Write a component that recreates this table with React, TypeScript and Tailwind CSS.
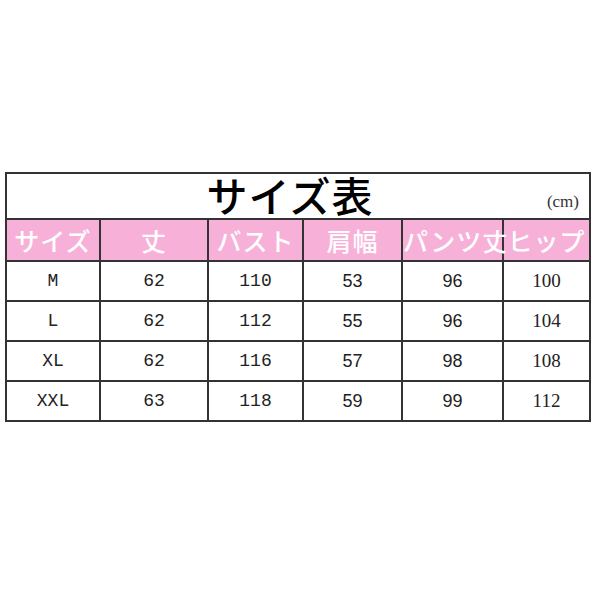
const headers = ['サイズ', '丈', 'バスト', '肩幅', 'パンツ丈', 'ヒップ'];

const rows = [
  ['M', '62', '110', '53', '96', '100'],
  ['L', '62', '112', '55', '96', '104'],
  ['XL', '62', '116', '57', '98', '108'],
  ['XXL', '63', '118', '59', '99', '112'],
];

const colWidths = ['w-[94px]', 'w-[108px]', 'w-[95px]', 'w-[99px]', 'w-[101px]', 'w-[87px]'];

const cellFonts = [
  "font-['Liberation_Mono',monospace] text-[18px]",
  "font-['Liberation_Mono',monospace] text-[18px]",
  "font-['Liberation_Mono',monospace] text-[18px]",
  "font-['Liberation_Sans',sans-serif] text-[18px]",
  "font-['Liberation_Sans',sans-serif] text-[18px]",
  "font-['Liberation_Serif',serif] text-[19px]",
];

export default function App() {
  return (
    <div className="h-[600px] w-[600px] bg-white pt-[172px] pl-[5px]">
      <table className="w-[585px] table-fixed border-collapse border-2 border-[#333]">
        <colgroup>
          {colWidths.map((w, i) => (
            <col key={i} className={w} />
          ))}
        </colgroup>
        <thead>
          <tr className="h-[45px]">
            <th colSpan={6} className="relative border-2 border-[#333] p-0 font-normal">
              <span className="pr-[16px] font-['Noto_Sans_CJK_JP',serif] text-[41px] leading-none font-medium tracking-[1px] text-black">
                サイズ表
              </span>
              <span className="absolute right-[10px] bottom-[4px] font-['Liberation_Serif',serif] text-[17px] text-[#333]">
                (cm)
              </span>
            </th>
          </tr>
          <tr className="h-[42px] bg-[#f7b1d8]">
            {headers.map((h) => (
              <th
                key={h}
                className="border-2 border-[#333] p-0 font-['Noto_Sans_CJK_JP',sans-serif] text-[25px] leading-none font-medium tracking-[1px] whitespace-nowrap text-white"
              >
                {h}
              </th>
            ))}
          </tr>
        </thead>
        <tbody>
          {rows.map((row, r) => (
            <tr key={r} className="h-[40px]">
              {row.map((cell, c) => (
                <td
                  key={c}
                  className={`border-2 border-[#333] p-0 text-center text-[#222] ${cellFonts[c]}`}
                >
                  {cell}
                </td>
              ))}
            </tr>
          ))}
        </tbody>
      </table>
    </div>
  );
}
